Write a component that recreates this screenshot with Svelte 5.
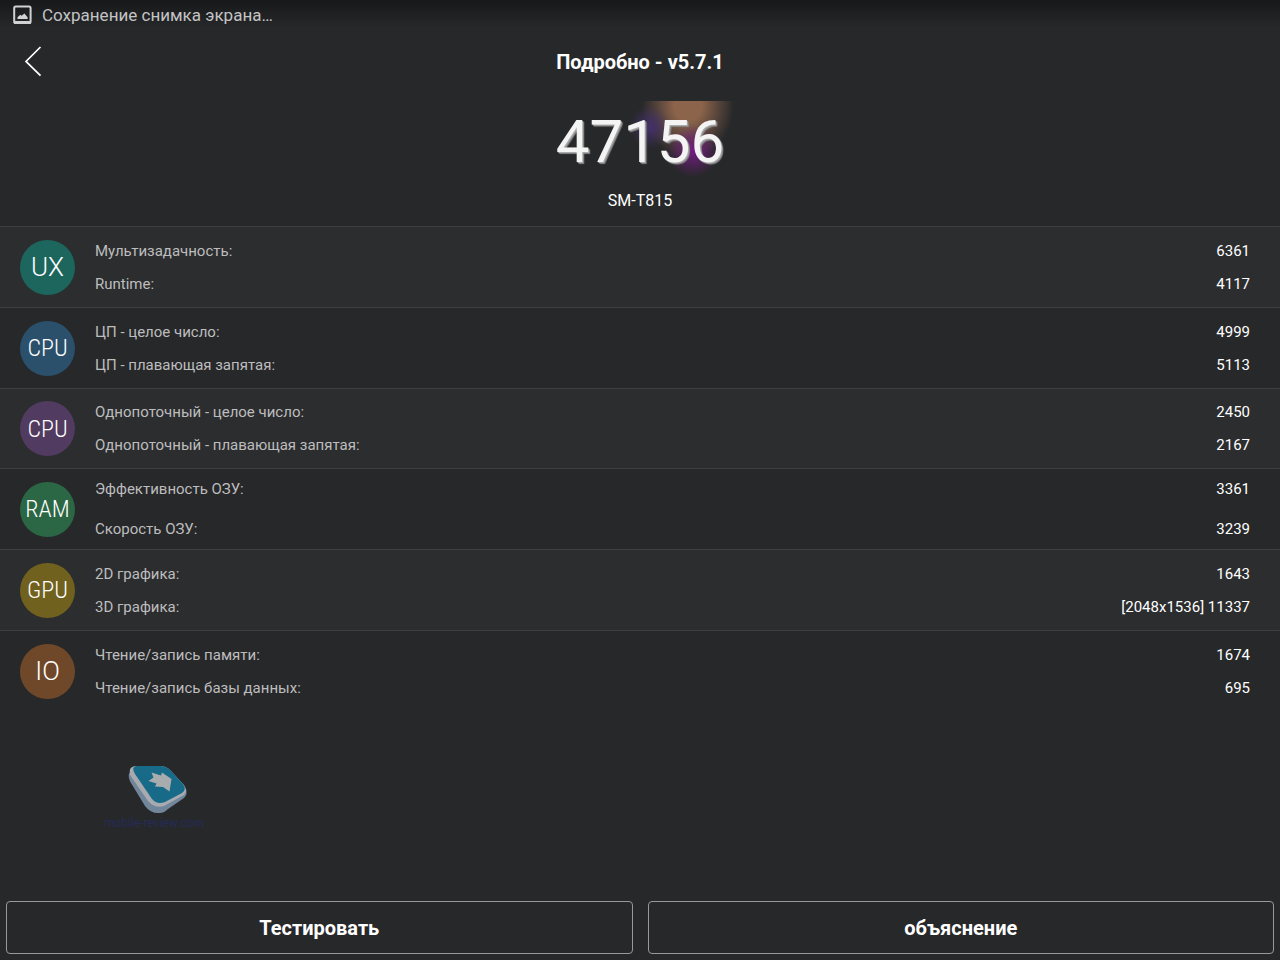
<script lang="ts">
  interface Line {
    label: string;
    value: string;
  }

  interface Group {
    badge: string;
    color: string;
    spread?: boolean;
    lines: Line[];
  }

  const groups: Group[] = [
    {
      badge: 'UX',
      color: '#1c665e',
      lines: [
        { label: 'Мультизадачность:', value: '6361' },
        { label: 'Runtime:', value: '4117' },
      ],
    },
    {
      badge: 'CPU',
      color: '#2b506c',
      lines: [
        { label: 'ЦП - целое число:', value: '4999' },
        { label: 'ЦП - плавающая запятая:', value: '5113' },
      ],
    },
    {
      badge: 'CPU',
      color: '#513b60',
      lines: [
        { label: 'Однопоточный - целое число:', value: '2450' },
        { label: 'Однопоточный - плавающая запятая:', value: '2167' },
      ],
    },
    {
      badge: 'RAM',
      color: '#2b6745',
      spread: true,
      lines: [
        { label: 'Эффективность ОЗУ:', value: '3361' },
        { label: 'Скорость ОЗУ:', value: '3239' },
      ],
    },
    {
      badge: 'GPU',
      color: '#70611f',
      lines: [
        { label: '2D графика:', value: '1643' },
        { label: '3D графика:', value: '[2048x1536] 11337' },
      ],
    },
    {
      badge: 'IO',
      color: '#6f4829',
      lines: [
        { label: 'Чтение/запись памяти:', value: '1674' },
        { label: 'Чтение/запись базы данных:', value: '695' },
      ],
    },
  ];
</script>

<div class="screen">
  <div class="status">
    <svg width="20" height="20" viewBox="0 0 20 20" aria-hidden="true">
      <rect x="2.2" y="1.5" width="16.4" height="16.6" rx="1.6" fill="none" stroke="#d2d2d2" stroke-width="2" />
      <path d="M2 16h17v2.8H2z" fill="#d2d2d2" />
      <path d="M5.5 14v-1.7L8.3 9.8l1.4 1 2.7-2.3 3.2 3.8V14z" fill="#d2d2d2" />
    </svg>
    <span>Сохранение снимка экрана…</span>
  </div>

  <header>
    <button type="button" class="back" aria-label="Назад">
      <svg width="18" height="32" viewBox="0 0 18 32" aria-hidden="true">
        <path d="M16.5 1 2 15.4 16.5 29.6" fill="none" stroke="#fff" stroke-width="1.7" />
      </svg>
    </button>
    <h1>Подробно - v5.7.1</h1>
  </header>

  <section class="total">
    <strong class="score">47156</strong>
    <span class="model">SM-T815</span>
  </section>

  <ul class="groups">
    {#each groups as group}
      <li class="group">
        <span class="badge" class:long={group.badge.length > 2} style={`background:${group.color}`}>{group.badge}</span>
        <dl class:spread={group.spread}>
          {#each group.lines as line}
            <div class="line">
              <dt>{line.label}</dt>
              <dd>{line.value}</dd>
            </div>
          {/each}
        </dl>
      </li>
    {/each}
  </ul>

  <div class="mark">
    <svg width="60" height="50" viewBox="0 0 60 50" aria-hidden="true">
      <path d="M1 8 Q0 13 3 18 L17 41 Q23 49 32 48 Q36 48 40 44 L56 33 Q60 29 58 24 L30 20z" fill="#71859b" />
      <path d="M7 1 Q0 2 2 10 L20 36 Q27 44 36 41 L56 30 Q60 26 56 20 L42 5 Q38 1 32 1z" fill="#a7abaf" />
      <path d="M8 1 Q3 2 7 9 L24 34 Q29 40 37 37 L54 28 Q59 25 55 19 L42 5 Q38 1 32 1z" fill="#176a88" />
      <path d="M23.5 7.5 33 10.5 34 7.5 43.5 14 41.5 26.5 35 22 27 21.5 28.5 18.5 20.5 16 25.5 12.5z" fill="#a9acae" />
    </svg>
    <span>mobile-review.com</span>
  </div>

  <footer>
    <button type="button">Тестировать</button>
    <button type="button">объяснение</button>
  </footer>
</div>

<style>
  :global(body) {
    margin: 0;
    background: #27282a;
  }
  .screen {
    min-height: 100vh;
    box-sizing: border-box;
    display: flex;
    flex-direction: column;
    background: linear-gradient(#17181a, #27282a 28px);
    color: #fff;
    font-family: Roboto, 'Noto Sans', sans-serif;
  }

  .status {
    display: flex;
    align-items: center;
    gap: 10px;
    height: 30px;
    padding: 0 12px;
    color: #c4c4c4;
    font-size: 17px;
    line-height: 20px;
  }

  header {
    display: grid;
    grid-template-columns: 1fr auto 1fr;
    align-items: center;
    height: 64px;
    padding: 0 24px;
  }
  .back {
    justify-self: start;
    display: flex;
    padding: 0;
    border: 0;
    background: transparent;
  }
  h1 {
    margin: 0;
    font-size: 20px;
    line-height: 24px;
    font-weight: 700;
  }

  .total {
    display: flex;
    flex-direction: column;
    align-items: center;
    gap: 8px;
    padding: 7px 0 15px;
  }
  .score {
    position: relative;
    isolation: isolate;
    font-size: 60px;
    line-height: 82px;
    font-weight: 400;
    color: #f4f4f4;
    text-shadow: 1px 1px 0 #aaa, 2px 2px 1px #888;
  }
  /* coloured glow behind the last digits */
  .score::before {
    content: '';
    position: absolute;
    z-index: -1;
    inset: 0 -16px 0 60px;
    background:
      radial-gradient(ellipse 26px 26px at 77px 50px, #741b82, transparent),
      radial-gradient(ellipse 20px 22px at 34px 26px, #44306c, transparent),
      radial-gradient(ellipse 46px 54px at 72px 4px, #8c644b 30%, #79594699 65%, transparent);
  }
  .model {
    font-size: 16px;
    line-height: 20px;
  }

  .groups {
    margin: 0;
    padding: 0;
    list-style: none;
  }
  .group {
    display: flex;
    align-items: center;
    gap: 20px;
    height: 80px;
    padding: 0 30px 0 20px;
    border-top: 1px solid #3d3e40;
  }
  .group:nth-child(odd) {
    background: #2c2d2f;
  }
  .group:nth-child(3) {
    height: 79px;
  }
  .badge {
    flex: none;
    display: grid;
    place-items: center;
    width: 55px;
    height: 55px;
    border-radius: 50%;
    font-size: 26px;
    font-weight: 300;
    line-height: 32px;
  }
  .badge.long {
    font-family: 'Roboto Condensed', Roboto, sans-serif;
    font-size: 24px;
  }
  dl {
    flex: 1;
    display: flex;
    flex-direction: column;
    gap: 13px;
    margin: 0;
  }
  dl.spread {
    gap: 20px;
  }
  .line {
    display: flex;
    justify-content: space-between;
    font-size: 15px;
    line-height: 20px;
  }
  dt {
    color: #bdbdbe;
  }
  dd {
    margin: 0;
  }

  .mark {
    align-self: flex-start;
    display: flex;
    flex-direction: column;
    align-items: center;
    margin: 54px 0 0 104px;
    font-size: 12px;
    line-height: 16px;
    color: #252b58;
  }
  .mark svg {
    margin-left: 8px;
  }

  footer {
    display: flex;
    gap: 15px;
    margin-top: auto;
    padding: 6px;
  }
  footer button {
    flex: 1;
    height: 53px;
    border: 1px solid #98999a;
    border-radius: 4px;
    background: transparent;
    color: #fff;
    font: 700 20px/24px Roboto, 'Noto Sans', sans-serif;
  }
</style>
